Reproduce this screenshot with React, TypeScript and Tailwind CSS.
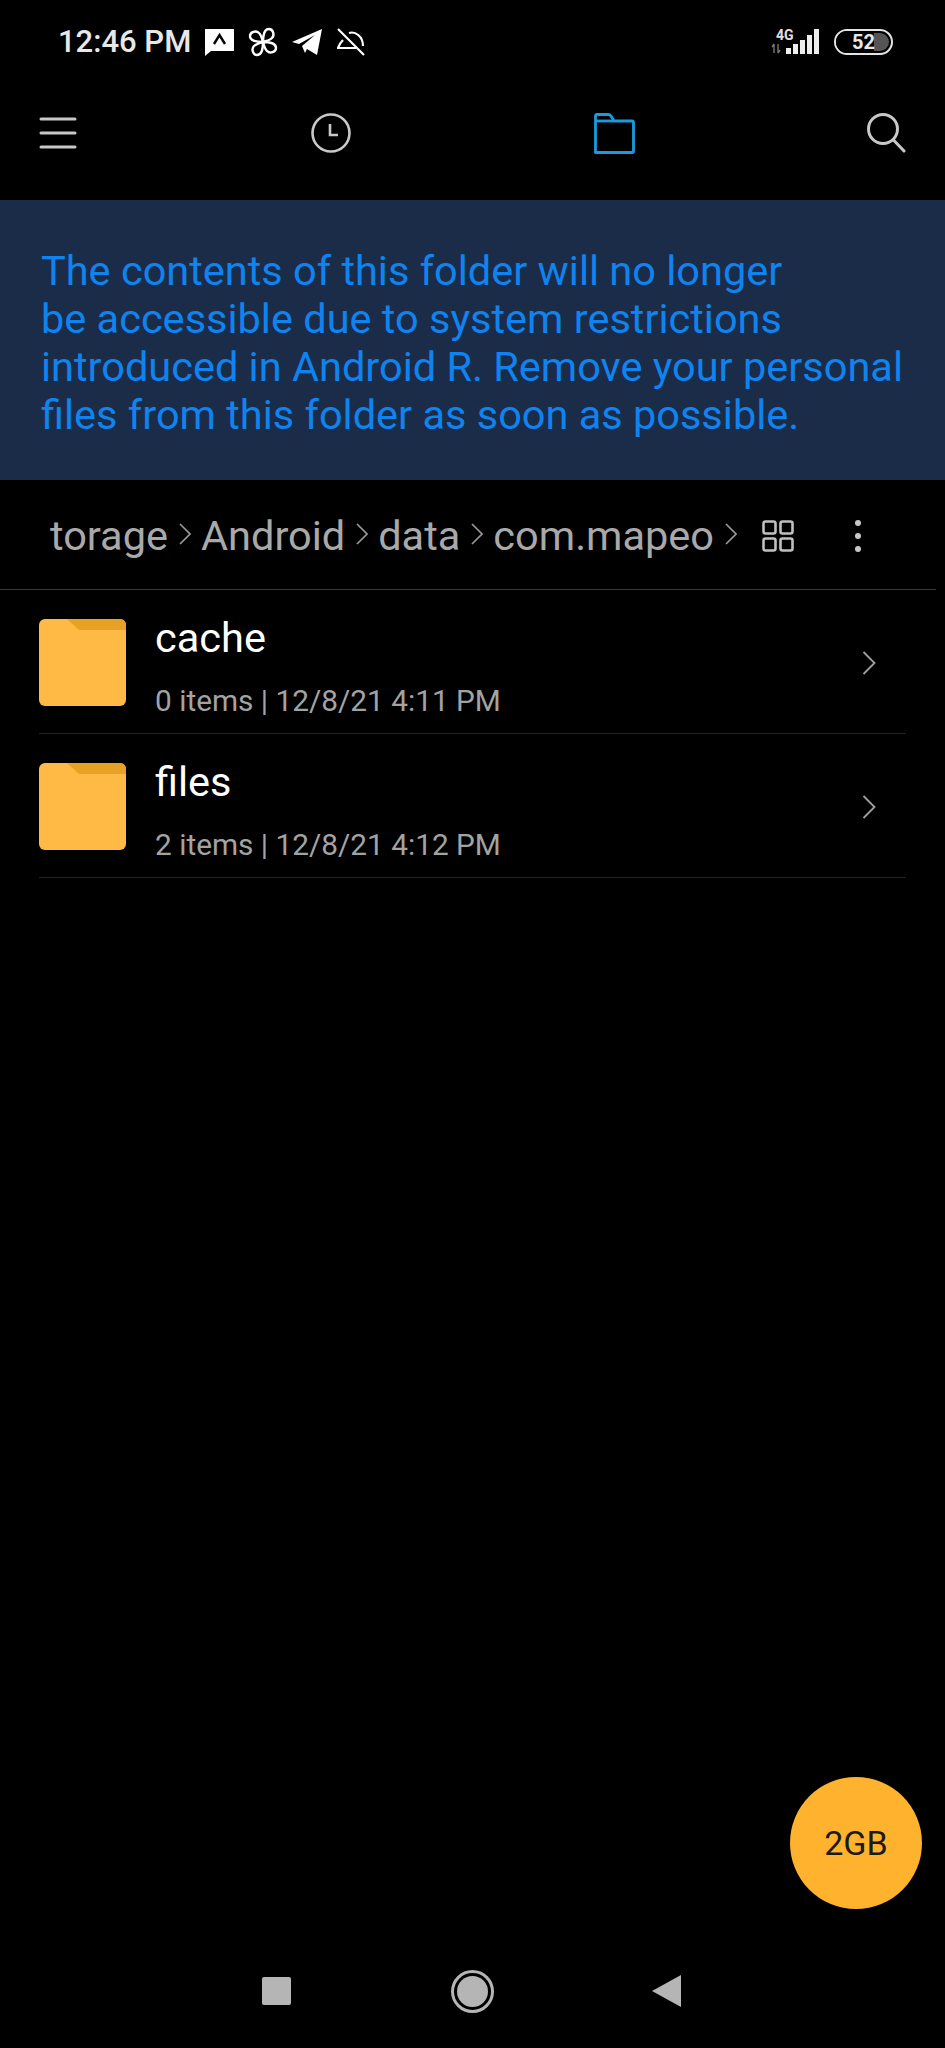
import React from "react";

const roboto = { fontFamily: "Roboto, 'Noto Sans', sans-serif" };

function Crumb({ label }: { label: string }) {
  return (
    <div className="flex items-center">
      <span className="text-[41.5px] leading-[48px] text-[#a9a9a9]">{label}</span>
      <svg width="12" height="24" viewBox="0 0 12 24" fill="none" className="ml-[11px] mr-[10px] mb-[4px]">
        <path d="M1 2 L11 12 L1 22" stroke="#9a9a9a" strokeWidth="1.6" />
      </svg>
    </div>
  );
}

function Folder() {
  return (
    <svg width="87" height="87" viewBox="0 0 87 87" className="shrink-0">
      <rect x="0" y="0" width="87" height="87" rx="6" fill="#ffb945" />
      <path d="M28 0 H81 a6 6 0 0 1 6 6 V11 H40 Z" fill="#e8a025" />
    </svg>
  );
}

function Row({ name, meta }: { name: string; meta: string }) {
  return (
    <div className="flex h-[144px] items-center border-b border-[#222222] pt-[2px]">
      <Folder />
      <div className="ml-[29px] flex flex-1 flex-col pt-[7px]">
        <div className="text-[41.5px] leading-[48px] text-white">{name}</div>
        <div className="mt-[21px] text-[29.8px] leading-[36px] text-[#a3a3a3]">{meta}</div>
      </div>
      <svg width="14" height="26" viewBox="0 0 14 26" fill="none" className="mr-[30px]">
        <path d="M1.5 2 L12.5 13 L1.5 24" stroke="#a0a0a0" strokeWidth="1.8" />
      </svg>
    </div>
  );
}

export default function App() {
  return (
    <div className="relative flex h-[2048px] w-[945px] flex-col overflow-hidden bg-black" style={roboto}>
      {/* status bar */}
      <div className="flex h-[80px] items-center justify-between pl-[58px] pr-[52px] pt-[3px]">
        <div className="flex items-center">
          <span className="text-[31px] font-medium leading-none text-[#e8e8e8]">12:46 PM</span>
          <svg width="30" height="28" viewBox="0 0 30 28" className="ml-[13px]">
            <path d="M1 1 H30 V23 H7 L1 28 Z" fill="#fff" />
            <path d="M10 16 L15.5 7 L21 16" stroke="#000" strokeWidth="2.4" fill="none" />
          </svg>
          <svg width="30" height="30" viewBox="0 0 30 30" fill="none" stroke="#fff" strokeWidth="2.4" className="ml-[14px]">
            <path d="M15 15 C9 15 2 14 2 9 C2 5 8 3 11 6 C13 8 14 11 15 15 Z" />
            <path d="M15 15 C15 9 16 2 21 2 C25 2 27 8 24 11 C22 13 19 14 15 15 Z" />
            <path d="M15 15 C21 15 28 16 28 21 C28 25 22 27 19 24 C17 22 16 19 15 15 Z" />
            <path d="M15 15 C15 21 14 28 9 28 C5 28 3 22 6 19 C8 17 11 16 15 15 Z" />
          </svg>
          <svg width="30" height="26" viewBox="0 0 30 26" className="ml-[14px]">
            <path d="M0 13 L30 0 L25 26 L15 20 L13 24 L10 17 L23 6 L7 15 Z" fill="#fff" />
          </svg>
          <svg width="28" height="28" viewBox="0 0 28 28" fill="none" stroke="#fff" strokeWidth="2.2" className="ml-[15px]">
            <path d="M1 1 L27 27" />
            <path d="M6 12 C4 14 2 17 1 20 H19" />
            <path d="M12 5 C18 3 26 8 26 18" />
          </svg>
        </div>
        <div className="flex items-center">
          <div className="relative h-[26px] w-[50px]">
            <span className="absolute left-[5px] top-[-1px] text-[14px] font-bold leading-none text-[#e0e0e0]">4G</span>
            <svg width="50" height="26" viewBox="0 0 50 26" className="absolute left-0 top-0">
              <path d="M3 15 V24 M1 18 L3 15 M7 15 V24 M7 24 L9 21" stroke="#777" strokeWidth="1.4" fill="none" />
              <rect x="15" y="19" width="5" height="6" fill="#eee" />
              <rect x="22" y="15" width="5" height="10" fill="#eee" />
              <rect x="29" y="11" width="5" height="14" fill="#eee" />
              <rect x="36" y="6" width="5" height="19" fill="#eee" />
              <rect x="43" y="0" width="5" height="25" fill="#eee" />
            </svg>
          </div>
          <div className="relative ml-[13px] flex h-[26px] w-[59px] items-center overflow-hidden rounded-full border-2 border-[#e4e4e4]">
            <div className="absolute inset-y-[2px] left-[2px] right-[2px] rounded-full bg-[#555555]" />
            <div className="absolute inset-y-0 left-0 w-[38px] bg-black" />
            <span className="relative ml-[16px] text-[20px] font-bold leading-none text-[#e8e8e8]">52</span>
          </div>
        </div>
      </div>

      {/* toolbar */}
      <div className="flex h-[120px] items-center pl-[39px] pb-[14px]">
        <svg width="38" height="32" viewBox="0 0 38 32" stroke="#c8c8c8" strokeWidth="3" strokeLinecap="round">
          <path d="M2 2 H36 M2 16 H36 M2 30 H36" />
        </svg>
        <svg width="40" height="40" viewBox="0 0 40 40" fill="none" stroke="#c8c8c8" strokeWidth="2.6" className="ml-[234px]">
          <circle cx="20" cy="20" r="18.5" />
          <path d="M19 11 V22 H27" />
        </svg>
        <svg width="41" height="41" viewBox="0 0 41 41" fill="none" stroke="#1a9be0" strokeWidth="2.8" strokeLinejoin="round" className="ml-[243px]">
          <path d="M1.5 39.5 V3 Q1.5 1.5 3 1.5 H14 Q16 1.5 17 3 L20 8 H38 Q39.5 8 39.5 9.5 V38 Q39.5 39.5 38 39.5 Z" />
          <path d="M1.5 8 H20" />
        </svg>
        <svg width="40" height="40" viewBox="0 0 40 40" fill="none" stroke="#c8c8c8" strokeWidth="3" strokeLinecap="round" className="ml-[231px]">
          <circle cx="17" cy="16" r="14.5" />
          <path d="M27.5 27 L38 38" />
        </svg>
      </div>

      {/* banner */}
      <div className="flex h-[280px] flex-col justify-center bg-[#1a2c47] pl-[41px] pt-[5px] text-[41.5px] leading-[48px] text-[#0f83f0]">
        <div>The contents of this folder will no longer</div>
        <div>be accessible due to system restrictions</div>
        <div>introduced in Android R. Remove your personal</div>
        <div>files from this folder as soon as possible.</div>
      </div>

      {/* breadcrumb */}
      <div className="mr-[9px] flex h-[110px] items-center border-b border-[#3a3a3a] pl-[50px] pt-[2px]">
        <div className="flex w-[700px] items-center">
          <Crumb label="torage" />
          <Crumb label="Android" />
          <Crumb label="data" />
          <Crumb label="com.mapeo" />
        </div>
        <svg width="32" height="32" viewBox="0 0 32 32" fill="none" stroke="#c0c0c0" strokeWidth="2.6" className="ml-[12px]">
          <rect x="1.5" y="1.5" width="12" height="12" rx="2" />
          <rect x="18.5" y="1.5" width="12" height="12" rx="2" />
          <rect x="1.5" y="18.5" width="12" height="12" rx="2" />
          <rect x="18.5" y="18.5" width="12" height="12" rx="2" />
        </svg>
        <svg width="8" height="34" viewBox="0 0 8 34" fill="#c8c8c8" className="ml-[60px]">
          <circle cx="4" cy="4" r="3" />
          <circle cx="4" cy="17" r="3" />
          <circle cx="4" cy="30" r="3" />
        </svg>
      </div>

      {/* files */}
      <div className="ml-[39px] mr-[39px]">
        <Row name="cache" meta="0 items | 12/8/21 4:11 PM" />
        <Row name="files" meta="2 items | 12/8/21 4:12 PM" />
      </div>

      {/* nav bar */}
      <div className="mt-auto flex h-[118px] items-center pl-[262px] pt-[4px]">
        <div className="h-[28px] w-[29px] rounded-[2px] bg-[#b5b5b5]" />
        <div className="ml-[160px] flex h-[43px] w-[43px] items-center justify-center rounded-full border-[3px] border-[#b5b5b5]">
          <div className="h-[31px] w-[31px] rounded-full bg-[#b5b5b5]" />
        </div>
        <svg width="29" height="32" viewBox="0 0 29 32" className="ml-[158px]">
          <path d="M0 16 L29 0 V32 Z" fill="#b5b5b5" />
        </svg>
      </div>

      {/* storage FAB */}
      <div className="absolute left-[790px] top-[1777px] flex h-[132px] w-[132px] items-center justify-center rounded-full bg-[#ffb22e] text-[34px] text-[#1a1a1a]">
        2GB
      </div>
    </div>
  );
}
